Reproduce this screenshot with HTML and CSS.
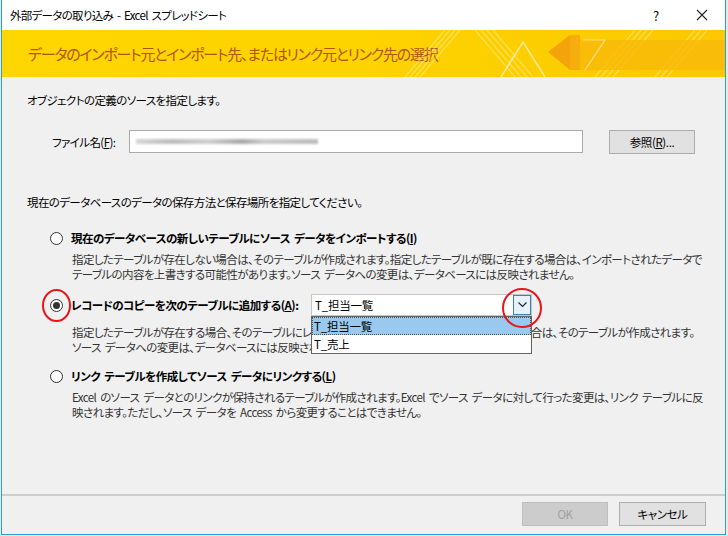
FILE: index.html
```html
<!DOCTYPE html>
<html lang="ja">

<head>
    <meta charset="UTF-8">
    <meta name="viewport" content="width=device-width, initial-scale=1.0">
    <title>外部データの取り込み - Excel スプレッドシート</title>
    <link rel="stylesheet" href="styles.css">
</head>

<body>
    <div class="window">
        <div class="titlebar">
            <span class="title">外部データの取り込み - Excel スプレッドシート</span>
            <div class="title-buttons">
                <span class="title-btn">?</span>
                <span class="title-btn">
                    <svg width="12" height="12" viewBox="0 0 12 12"><path d="M1 1 L11 11 M11 1 L1 11" stroke="#222" stroke-width="1.1" fill="none"/></svg>
                </span>
            </div>
        </div>

        <div class="banner">
            <h1>データのインポート元とインポート先、またはリンク元とリンク先の選択</h1>
            <svg class="banner-art" width="360" height="47" viewBox="0 0 360 47">
                <!-- diagonal light stripes -->
                <g stroke="#fff" stroke-opacity="0.35" stroke-width="1.2">
                    <path d="M40 47 L80 0 M45 47 L85 0 M50 47 L90 0 M55 47 L95 0"/>
                    <path d="M110 0 L150 47 M116 0 L156 47 M122 0 L162 47 M128 0 L168 47"/>
                    <path d="M230 47 L270 0 M236 47 L276 0 M242 47 L282 0 M248 47 L288 0"/>
                    <path d="M290 47 L330 0 M296 47 L336 0 M302 47 L342 0"/>
                </g>
                <path d="M136 47 L158 12 L180 47" stroke="#fff" stroke-opacity="0.6" stroke-width="1.5" fill="none"/>
                <polygon points="183,22 205,5 205,40" fill="#f4a30b"/>
                <rect x="205" y="5" width="10" height="35" fill="#f6ae0c"/>
                <polygon points="215,10 360,10 360,40 215,40" fill="#f7b90a" opacity="0.8"/>
                <path d="M218 10 L240 10 L220 40" stroke="#fff" stroke-opacity="0.5" stroke-width="1.2" fill="none"/>
            </svg>
        </div>

        <div class="content">
            <p class="intro">オブジェクトの定義のソースを指定します。</p>

            <div class="file-row">
                <label class="file-label">ファイル名(<u>F</u>):</label>
                <div class="file-input"><span class="blurred"></span></div>
                <button class="btn browse">参照(<u>R</u>)...</button>
            </div>

            <p class="intro second">現在のデータベースのデータの保存方法と保存場所を指定してください。</p>

            <div class="option">
                <div class="option-head">
                    <span class="radio"></span>
                    <span class="option-label">現在のデータベースの新しいテーブルにソース データをインポートする(<u>I</u>)</span>
                </div>
                <p class="desc">指定したテーブルが存在しない場合は、そのテーブルが作成されます。指定したテーブルが既に存在する場合は、インポートされたデータで<br>テーブルの内容を上書きする可能性があります。ソース データへの変更は、データベースには反映されません。</p>
            </div>

            <div class="option append">
                <div class="option-head">
                    <span class="radio checked"><span class="mark mark-radio"></span></span>
                    <span class="option-label">レコードのコピーを次のテーブルに追加する(<u>A</u>):</span>
                    <div class="combo">
                        <span class="combo-value">T_担当一覧</span>
                        <span class="combo-arrow">
                            <svg width="9" height="6" viewBox="0 0 9 6"><path d="M0.5 0.5 L4.5 4.5 L8.5 0.5" stroke="#222" stroke-width="1.1" fill="none"/></svg>
                        </span>
                        <span class="mark mark-combo"></span>
                        <ul class="combo-list">
                            <li class="selected">T_担当一覧</li>
                            <li>T_売上</li>
                        </ul>
                    </div>
                </div>
                <p class="desc">指定したテーブルが存在する場合、そのテーブルにレコードが追加されます。テーブルが存在しない場合は、そのテーブルが作成されます。<br>ソース データへの変更は、データベースには反映されません。</p>
            </div>

            <div class="option link">
                <div class="option-head">
                    <span class="radio"></span>
                    <span class="option-label">リンク テーブルを作成してソース データにリンクする(<u>L</u>)</span>
                </div>
                <p class="desc">Excel のソース データとのリンクが保持されるテーブルが作成されます。Excel でソース データに対して行った変更は、リンク テーブルに反<br>映されます。ただし、ソース データを Access から変更することはできません。</p>
            </div>
        </div>

        <div class="footer">
            <button class="btn disabled">OK</button>
            <button class="btn">キャンセル</button>
        </div>
    </div>
</body>

</html>
```

FILE: styles.css
```css
:root {
    --accent: #2a9fd6;
    --dialog-bg: #f0f0f0;
    --text: #000000;
    --text-muted: #333333;
    --border: #adadad;
    --banner-text: #b5530b;
}

body {
    margin: 0;
    background-color: #e9e9e9;
    font-family: "Noto Sans CJK JP", "Noto Sans", sans-serif;
    font-size: 11.5px;
    font-feature-settings: "palt";
    letter-spacing: -0.6px;
    word-spacing: 2px;
    color: var(--text);
}

.window {
    width: 725px;
    height: 535px;
    margin-left: 1px;
    box-sizing: border-box;
    border: 1px solid var(--accent);
    border-top: none;
    background-color: var(--dialog-bg);
    display: flex;
    flex-direction: column;
}

.titlebar {
    height: 30px;
    background-color: #ffffff;
    display: flex;
    align-items: center;
    justify-content: space-between;
    padding-left: 8px;
}

.title {
    letter-spacing: -0.7px;
}

.title-buttons {
    display: flex;
    height: 100%;
}

.title-btn {
    width: 46px;
    display: flex;
    align-items: center;
    justify-content: center;
    font-size: 13px;
    letter-spacing: 0;
}

.banner {
    height: 47px;
    position: relative;
    overflow: hidden;
    background: linear-gradient(90deg, #fed600 0%, #fdd300 50%, #fcc800 100%);
    display: flex;
    align-items: center;
}

.banner h1 {
    margin: 0 0 0 26px;
    font-size: 15px;
    font-weight: normal;
    letter-spacing: -1.25px;
    color: var(--banner-text);
    position: relative;
}

.banner-art {
    position: absolute;
    right: 0;
    top: 0;
}

.content {
    flex: 1;
    padding: 0 0 0 25px;
}

.intro {
    margin: 15px 0 0;
    line-height: 16px;
    white-space: nowrap;
}

.intro.second {
    margin-top: 40px;
}

.file-row {
    display: flex;
    align-items: center;
    margin-top: 21px;
    height: 25px;
}

.file-label {
    width: 77px;
    margin-left: 25px;
}

.file-input {
    width: 454px;
    height: 23px;
    box-sizing: border-box;
    border: 1px solid #aaaaaa;
    background-color: #ffffff;
    display: flex;
    align-items: center;
    padding-left: 6px;
}

.blurred {
    width: 182px;
    height: 5px;
    background: linear-gradient(90deg, #d6d6d6 0%, #bdbdbd 20%, #cfcfcf 40%, #a9a9a9 58%, #cbcbcb 70%, #bcbcbc 100%);
    filter: blur(1.2px);
}

.btn {
    font-family: inherit;
    font-size: 11.5px;
    font-feature-settings: "palt";
    letter-spacing: -0.4px;
    height: 24px;
    width: 86px;
    background-color: #e1e1e1;
    border: 1px solid var(--border);
    color: var(--text);
    padding: 0;
}

.btn.browse {
    margin-left: 26px;
}

.btn.disabled {
    background-color: #cccccc;
    border-color: #bfbfbf;
    color: #a0a0a0;
}

.option {
    margin-left: 23px;
    margin-top: 17px;
}

.option.append {
    margin-top: 12px;
}

.option.link {
    margin-top: 10px;
}

.option-head {
    display: flex;
    align-items: center;
    height: 22px;
}

.radio {
    width: 13px;
    height: 13px;
    box-sizing: border-box;
    border: 1px solid #333333;
    border-radius: 50%;
    background-color: #ffffff;
    margin-right: 8px;
    position: relative;
    display: flex;
    align-items: center;
    justify-content: center;
}

.radio.checked::after {
    content: "";
    width: 7px;
    height: 7px;
    border-radius: 50%;
    background-color: #333333;
}

.option-label {
    font-weight: bold;
    letter-spacing: -0.5px;
    white-space: nowrap;
}

.desc {
    margin: 3px 0 0 22px;
    line-height: 15px;
    color: var(--text-muted);
    white-space: nowrap;
}

.option.append .desc {
    margin-top: 9px;
}

.option.link .desc {
    margin-top: 3px;
}

/* combo box with its open list */
.combo {
    position: relative;
    width: 221px;
    height: 22px;
    box-sizing: border-box;
    margin-left: auto;
    margin-right: 193px;
    border: 1px solid #c4c4c4;
    background-color: #ffffff;
    display: flex;
    align-items: center;
    letter-spacing: -0.2px;
}

.combo-value {
    padding-left: 3px;
    flex: 1;
}

.combo-arrow {
    width: 18px;
    height: 20px;
    box-sizing: border-box;
    border: 1px solid #3c7fb1;
    background-color: #e5f1fb;
    display: flex;
    align-items: center;
    justify-content: center;
}

.combo-list {
    position: absolute;
    left: -1px;
    top: 21px;
    width: 221px;
    box-sizing: border-box;
    margin: 0;
    padding: 0;
    list-style: none;
    background-color: #ffffff;
    border: 1px solid #646464;
    z-index: 2;
}

.combo-list li {
    height: 18px;
    line-height: 18px;
    padding-left: 2px;
    box-sizing: border-box;
}

.combo-list li.selected {
    background-color: #99c9ef;
    outline: 1px dotted #555555;
    outline-offset: -1px;
}

/* red highlight rings */
.mark {
    position: absolute;
    border: 2px solid #e8151b;
    border-radius: 50%;
    box-sizing: border-box;
    z-index: 3;
}

.mark-radio {
    width: 29px;
    height: 33px;
    left: -9px;
    top: -11px;
}

.mark-combo {
    width: 40px;
    height: 40px;
    left: 190px;
    top: -7px;
}

.footer {
    height: 40px;
    box-sizing: border-box;
    border-top: 2px solid #cdcdcd;
    display: flex;
    justify-content: flex-end;
    align-items: flex-start;
    gap: 11px;
    padding: 6px 19px 0 0;
}

.footer .btn:last-child {
    width: 87px;
}
```
